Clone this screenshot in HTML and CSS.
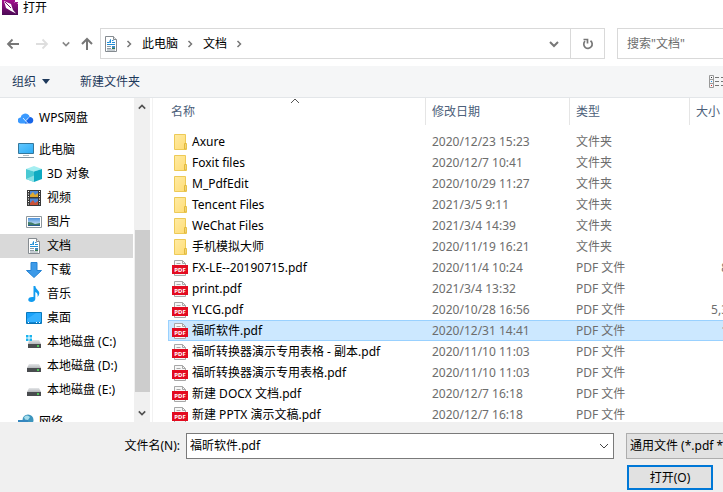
FILE: index.html
```html
<!DOCTYPE html>
<html lang="zh-CN">
<head>
<meta charset="utf-8">
<title>打开</title>
<link rel="stylesheet" href="styles.css">
</head>
<body>
<svg class="sprite" aria-hidden="true">
  <defs>
    <linearGradient id="g-folder" x1="0" y1="0" x2="1" y2="1"><stop offset="0" stop-color="#ffeba3"/><stop offset="1" stop-color="#ffdc74"/></linearGradient>
    <linearGradient id="g-purple" x1="0" y1="0" x2="0" y2="1"><stop offset="0" stop-color="#a5108f"/><stop offset="1" stop-color="#4b0a55"/></linearGradient>
    <linearGradient id="g-screen" x1="0" y1="0" x2="1" y2="1"><stop offset="0" stop-color="#62c8ff"/><stop offset="1" stop-color="#2cabf5"/></linearGradient>
    <linearGradient id="g-disk" x1="0" y1="0" x2="0" y2="1"><stop offset="0" stop-color="#e4e6e8"/><stop offset="1" stop-color="#b4b7ba"/></linearGradient>
    <linearGradient id="g-sky" x1="0" y1="0" x2="0" y2="1"><stop offset="0" stop-color="#4f94dc"/><stop offset="1" stop-color="#e3f1fa"/></linearGradient>
  </defs>
  <symbol id="i-folder" viewBox="0 0 16 16">
    <path d="M2.500.5h11v9h1v6h-12z" fill="url(#g-folder)" stroke="#edca57"/>
    <path d="M12.500 15v-5.500h1.500v5.500z" fill="#fff0b5" stroke="#e3b93b"/>
  </symbol>
  <symbol id="i-pdf" viewBox="0 0 16 16">
    <path d="M2.500.5h8l3 3v12h-11z" fill="#f7f7f7" stroke="#a7a7a7"/>
    <path d="M10.500.5v3h3M4.500 3.500h4" fill="none" stroke="#a7a7a7"/>
    <path d="M0 5h16v9H0z" fill="#e30b20"/>
    <text class="pdf-tag" x="8" y="12" text-anchor="middle">PDF</text>
  </symbol>
  <symbol id="i-doc" viewBox="0 0 16 16">
    <path d="M2.500.5h8l3 3v12h-11z" fill="#fff" stroke="#858b90"/>
    <path d="M10.500.5v3h3" fill="#e5e8e9" stroke="#858b90"/>
    <path d="M4 6.500h2.500l1-3V7M9 4.500h1.500M9 6.500h3M4 8.500h8" fill="none" stroke="#218ed6"/>
    <path d="M4 10.500h4M4 12.500h4M4 14h8" stroke="#8d9ba5"/>
    <path d="M9 10h3v3H9z" fill="#4089bd"/><path d="M9 12h3v1H9z" fill="#347b4d"/>
  </symbol>
  <symbol id="i-cloud" viewBox="0 0 16 16">
    <path d="M3 13.500a3 3 0 0 1-.4-6A4.800 4.800 0 0 1 11 5.200l1 3-4 5.300z" fill="#3b9aff"/>
    <path d="M7 13.500l3.500-6a3.600 3.600 0 0 1 3.200 0 3.300 3.300 0 0 1-.7 6z" fill="#1765e8"/>
    <path d="M5 8l5 5.500M8 10.500l3-3.200" fill="none" stroke="#fff" stroke-width=".8"/>
  </symbol>
  <symbol id="i-pc" viewBox="0 0 16 16">
    <path d="M.5 1.500h15v10H.5z" fill="url(#g-screen)" stroke="#35779b"/>
    <path d="M5 13h6v1H5z" fill="#aebbc3"/><path d="M0 15.500h16" stroke="#8194a1"/>
  </symbol>
  <symbol id="i-cube" viewBox="0 0 16 16">
    <path d="M8 0 16 3 8 5.500 0 3z" fill="#a5eef1"/><path d="M0 3l8 2.500V16l-8-3z" fill="#49c9d3"/><path d="M8 5.500 16 3v10l-8 3z" fill="#0eaac2"/>
    <path d="M0 13l8-3.500V16z" fill="#8be1e5"/>
  </symbol>
  <symbol id="i-film" viewBox="0 0 16 16">
    <path d="M1 0h14v16H1z" fill="#383838"/><path d="M4 1h8v6H4zM4 8.500h8V15H4z" fill="#4f87d5"/>
    <path d="M4 5l3-3 2 3 3-2v4H4z" fill="#e0a92e"/><path d="M4 13l3-3 2 3 3-2v4H4z" fill="#ca5138"/>
    <path d="M2.500 1v15M13.500 1v15" stroke="#fff" stroke-dasharray="1 1.500"/>
  </symbol>
  <symbol id="i-pic" viewBox="0 0 16 16">
    <path d="M.5 2.500h15v11H.5z" fill="#fff" stroke="#8e989e"/><path d="M2 4h12v8H2z" fill="url(#g-sky)"/>
    <path d="M2 8q4 0 7 2l5-1v3H2z" fill="#427d68"/><path d="M2 11h12v1H2z" fill="#275b91"/>
  </symbol>
  <symbol id="i-down" viewBox="0 0 16 16"><path d="M5 .5h6v8h4.500L8 15.500.5 8.500H5z" fill="#3d9ae8" stroke="#2583d4"/></symbol>
  <symbol id="i-note" viewBox="0 0 16 16">
    <path d="M7.500 0h1.800q.2 2.600 2.500 4.200Q15 7 11.500 11q.8-4-2.200-5v7q-.3 2.700-3.800 3Q2 16 2.300 13.300 3 10.500 7.500 11z" fill="#129cf0"/>
  </symbol>
  <symbol id="i-desk" viewBox="0 0 16 16">
    <path d="M.5 2.500h15v11H.5z" fill="#19a2fb" stroke="#0879bd"/><path d="M1 9l9-6h5v9H1z" fill="#35b1ff"/><path d="M1 13h14" stroke="#076aab"/><path d="M2 12.500h1M10 12.500h1M13 12.500h1" stroke="#fff"/>
  </symbol>
  <symbol id="i-disk" viewBox="0 0 16 16">
    <path d="M3 6h10l2 4H1z" fill="url(#g-disk)"/><path d="M1 10h14v4H1z" fill="#494c4f"/><path d="M11 12h2" stroke="#53ed5c" stroke-width="1.500"/>
  </symbol>
  <symbol id="i-sysdisk" viewBox="0 0 16 16">
    <path d="M3 6h10l2 4H2z" fill="url(#g-disk)"/><path d="M2 10h13v4H2z" fill="#494c4f"/><path d="M11 12h2" stroke="#53ed5c" stroke-width="1.500"/>
    <path d="M0 1h2.500v2.500H0zM3.500 1H6v2.500H3.500zM0 4.500h2.500V7H0zM3.500 4.500H6V7H3.500z" fill="#19b4ef"/>
  </symbol>
  <symbol id="i-net" viewBox="0 0 16 16">
    <circle cx="10" cy="6" r="5.500" fill="#3d95bd"/><path d="M6 3q3-3 6 0l-2 3-3-.5z" fill="#a4ddec"/><path d="M0 6h10v7H0z" fill="#3587bf"/>
  </symbol>
  <symbol id="i-sep" viewBox="0 0 8 8"><path d="M2.500 1l3 3-3 3" fill="none" stroke="#777" stroke-width="1.500"/></symbol>
  <symbol id="i-chev" viewBox="0 0 10 10"><path d="M1 3l4 4 4-4" fill="none" stroke="currentColor" stroke-width="2"/></symbol>
  <symbol id="i-thin" viewBox="0 0 10 10"><path d="M1 3l4 4 4-4" fill="none" stroke="currentColor"/></symbol>
</svg>

<main class="dialog">
  <header class="title">
    <svg class="ico" viewBox="0 0 16 16"><path d="M0 0h12l4 4v11H0z" fill="url(#g-purple)"/><path d="M12 0l4 0v3h-4z" fill="#fff"/><path d="M12.500 0v2.500H16" fill="none" stroke="#9b198c"/><path d="M2 1l7 3 2 6 3 3.500L9 11 4 8z" fill="#fff"/><path d="M3 2l6 6" stroke="#75116f"/></svg>
    <span>打开</span>
  </header>

  <nav class="nav">
    <button class="nav-btn back" aria-label="后退"><svg viewBox="0 0 14 14"><path d="M13 7H2M6.500 2.500 2 7l4.500 4.500" fill="none" stroke="#777" stroke-width="1.800"/></svg></button>
    <button class="nav-btn forward" aria-label="前进"><svg viewBox="0 0 14 14"><path d="M1 7h11M7.500 2.500 12 7l-4.500 4.500" fill="none" stroke="#dedede" stroke-width="1.800"/></svg></button>
    <button class="nav-btn recent" aria-label="最近位置"><svg><use href="#i-chev"/></svg></button>
    <button class="nav-btn up" aria-label="上移"><svg viewBox="0 0 14 14"><path d="M7 13V2M2 7l5-5 5 5" fill="none" stroke="#777" stroke-width="2"/></svg></button>
    <div class="address">
      <svg class="ico"><use href="#i-doc"/></svg>
      <svg class="sep"><use href="#i-sep"/></svg>
      <a href="#pc">此电脑</a>
      <svg class="sep"><use href="#i-sep"/></svg>
      <a href="#docs">文档</a>
      <svg class="sep"><use href="#i-sep"/></svg>
      <button class="drop" aria-label="历史"><svg><use href="#i-chev"/></svg></button>
      <button class="reload" aria-label="刷新"><svg viewBox="0 0 12 12"><path d="M3 3.200A4.200 4.200 0 1 0 8.500 2.800M1.500 1.500h4V5.500" fill="none" stroke="#777" stroke-width="1.700"/></svg></button>
    </div>
    <input class="search" type="text" aria-label="搜索" placeholder='搜索"文档"'>
  </nav>

  <div class="toolbar">
    <button>组织<i class="tri"></i></button>
    <button>新建文件夹</button>
    <button class="view" aria-label="更改视图"><svg viewBox="0 0 14 14"><path d="M.5.500h4v12h-4zM.5 4.500h4M.5 8.500h4" fill="none" stroke="#999"/><path d="M2 2.500h1" stroke="#333"/><path d="M2 6.500h1" stroke="#258ee0"/><path d="M2 10.500h1" stroke="#d22"/><path d="M6 2.500h8M6 6.500h8M6 10.500h8" stroke="#777" stroke-dasharray="4 2"/></svg></button>
  </div>

  <section class="body">
    <nav class="side">
      <ul>
        <li><svg class="ico"><use href="#i-cloud"/></svg>WPS网盘</li>
      </ul>
      <ul id="pc">
        <li><svg class="ico"><use href="#i-pc"/></svg>此电脑</li>
        <li class="sub"><svg class="ico"><use href="#i-cube"/></svg>3D 对象</li>
        <li class="sub"><svg class="ico"><use href="#i-film"/></svg>视频</li>
        <li class="sub"><svg class="ico"><use href="#i-pic"/></svg>图片</li>
        <li class="sub current" id="docs"><svg class="ico"><use href="#i-doc"/></svg>文档</li>
        <li class="sub"><svg class="ico"><use href="#i-down"/></svg>下载</li>
        <li class="sub"><svg class="ico"><use href="#i-note"/></svg>音乐</li>
        <li class="sub"><svg class="ico"><use href="#i-desk"/></svg>桌面</li>
        <li class="sub"><svg class="ico"><use href="#i-sysdisk"/></svg>本地磁盘 (C:)</li>
        <li class="sub"><svg class="ico"><use href="#i-disk"/></svg>本地磁盘 (D:)</li>
        <li class="sub"><svg class="ico"><use href="#i-disk"/></svg>本地磁盘 (E:)</li>
      </ul>
      <ul>
        <li><svg class="ico"><use href="#i-net"/></svg>网络</li>
      </ul>
    </nav>
    <div class="scroll">
      <svg class="flip"><use href="#i-chev"/></svg>
      <div class="track"><div class="thumb"></div></div>
      <svg><use href="#i-chev"/></svg>
    </div>

    <div class="files">
      <svg class="sort flip"><use href="#i-thin"/></svg>
      <table>
        <colgroup><col><col class="c-date"><col class="c-type"><col class="c-size"></colgroup>
        <thead><tr><th><span>名称</span></th><th><span>修改日期</span></th><th><span>类型</span></th><th><span>大小</span></th></tr></thead>
        <tbody>
          <tr><td><div><svg class="ico"><use href="#i-folder"/></svg>Axure</div></td><td>2020/12/23 15:23</td><td>文件夹</td><td></td></tr>
          <tr><td><div><svg class="ico"><use href="#i-folder"/></svg>Foxit files</div></td><td>2020/12/7 10:41</td><td>文件夹</td><td></td></tr>
          <tr><td><div><svg class="ico"><use href="#i-folder"/></svg>M_PdfEdit</div></td><td>2020/10/29 11:27</td><td>文件夹</td><td></td></tr>
          <tr><td><div><svg class="ico"><use href="#i-folder"/></svg>Tencent Files</div></td><td>2021/3/5 9:11</td><td>文件夹</td><td></td></tr>
          <tr><td><div><svg class="ico"><use href="#i-folder"/></svg>WeChat Files</div></td><td>2021/3/4 14:39</td><td>文件夹</td><td></td></tr>
          <tr><td><div><svg class="ico"><use href="#i-folder"/></svg>手机模拟大师</div></td><td>2020/11/19 16:21</td><td>文件夹</td><td></td></tr>
          <tr><td><div><svg class="ico"><use href="#i-pdf"/></svg>FX-LE--20190715.pdf</div></td><td>2020/11/4 10:24</td><td>PDF 文件</td><td>8</td></tr>
          <tr><td><div><svg class="ico"><use href="#i-pdf"/></svg>print.pdf</div></td><td>2021/3/4 13:32</td><td>PDF 文件</td><td></td></tr>
          <tr><td><div><svg class="ico"><use href="#i-pdf"/></svg>YLCG.pdf</div></td><td>2020/10/28 16:56</td><td>PDF 文件</td><td>5,3</td></tr>
          <tr class="selected"><td><div><svg class="ico"><use href="#i-pdf"/></svg>福昕软件.pdf</div></td><td>2020/12/31 14:41</td><td>PDF 文件</td><td>1</td></tr>
          <tr><td><div><svg class="ico"><use href="#i-pdf"/></svg>福昕转换器演示专用表格 - 副本.pdf</div></td><td>2020/11/10 11:03</td><td>PDF 文件</td><td></td></tr>
          <tr><td><div><svg class="ico"><use href="#i-pdf"/></svg>福昕转换器演示专用表格.pdf</div></td><td>2020/11/10 11:03</td><td>PDF 文件</td><td></td></tr>
          <tr><td><div><svg class="ico"><use href="#i-pdf"/></svg>新建 DOCX 文档.pdf</div></td><td>2020/12/7 16:18</td><td>PDF 文件</td><td></td></tr>
          <tr><td><div><svg class="ico"><use href="#i-pdf"/></svg>新建 PPTX 演示文稿.pdf</div></td><td>2020/12/7 16:18</td><td>PDF 文件</td><td></td></tr>
        </tbody>
      </table>
    </div>
  </section>

  <footer class="footer">
    <div class="row">
      <label for="fname">文件名(N):</label>
      <div class="combo">
        <input id="fname" type="text" value="福昕软件.pdf">
        <button aria-label="展开"><svg><use href="#i-thin"/></svg></button>
      </div>
      <select class="kind" aria-label="文件类型"><option>通用文件 (*.pdf *</option></select>
    </div>
    <button class="open">打开(O)</button>
  </footer>
</main>
</body>
</html>
```
FILE: styles.css
```css
* { box-sizing: border-box; }

body {
  margin: 0;
  overflow: hidden;
  background: #fff;
  color: #000;
  font: 12px/16px "Noto Sans", "Noto Sans CJK SC", sans-serif;
}

button, input, select {
  margin: 0;
  padding: 0;
  border: 0;
  border-radius: 0;
  background: none;
  color: inherit;
  font: inherit;
}

a { color: inherit; text-decoration: none; }
svg { display: block; flex: none; width: 10px; height: 10px; }
.sprite { position: absolute; width: 0; height: 0; }
.ico { width: 16px; height: 16px; }
.flip { transform: scaleY(-1); }
.pdf-tag { fill: #fff; font-size: 6px; font-weight: 700; }

.dialog {
  display: flex;
  flex-direction: column;
  height: 100vh;
}

/* Title and navigation */
.title {
  display: flex;
  gap: 5px;
  height: 28px;
  padding-left: 2px;
}

.nav {
  display: flex;
  align-items: center;
  height: 31px;
}

.nav-btn { display: flex; justify-content: center; }
.nav-btn svg { width: 14px; height: 14px; }
.back { width: 26px; }
.forward { width: 32px; }
.recent { width: 16px; color: #888; }
.nav-btn.recent svg { width: 8px; height: 8px; }
.up { width: 26px; }

.address {
  display: flex;
  flex: 1;
  align-items: center;
  height: 31px;
  margin-right: 12px;
  padding-left: 2px;
  border: 1px solid #d9d9d9;
}
.address .sep { width: 8px; height: 8px; margin: 0 9px 0 8px; }
.address .ico + .sep { margin-left: 6px; }
.drop { margin-left: auto; padding: 0 11px; color: #777; }
.reload {
  display: grid;
  place-items: center;
  align-self: stretch;
  width: 34px;
  border-left: 1px solid #d9d9d9;
}
.reload svg { width: 12px; height: 12px; }

.search {
  width: 106px;
  height: 31px;
  padding-left: 9px;
  border: 1px solid #d9d9d9;
  border-right: 0;
}
.search::placeholder { color: #6d6d6d; opacity: 1; }

.toolbar {
  display: flex;
  align-items: center;
  gap: 30px;
  height: 32px;
  margin-top: 7px;
  padding-left: 12px;
  border-bottom: 1px solid #e3e6e9;
  background: #f5f6f7;
  color: #1e395b;
}
.toolbar button { display: flex; align-items: center; gap: 6px; }
.tri {
  border: 4px solid transparent;
  border-top: 5px solid #1e395b;
  border-bottom: 0;
}
.view { margin-left: auto; }
.view svg { width: 14px; height: 14px; }

/* Folder tree */
.body {
  display: flex;
  flex: 1;
  min-height: 0;
  overflow: hidden;
}

.side { width: 133px; padding-top: 8px; }
.side ul { margin: 0 0 8px; padding: 0; list-style: none; }
.side li {
  display: flex;
  align-items: center;
  gap: 5px;
  height: 24px;
  padding-left: 18px;
  white-space: nowrap;
}
.side .sub { padding-left: 26px; }
.side .current { background: #d9d9d9; }

.scroll {
  display: flex;
  flex-direction: column;
  align-items: center;
  justify-content: space-between;
  width: 16px;
  margin-left: 1px;
  padding: 4px 0;
  background: #f0f0f0;
  color: #505050;
}
.scroll svg { width: 8px; height: 10px; }
.track {
  display: flex;
  flex-direction: column;
  justify-content: flex-end;
  flex: 1;
  width: 15px;
  padding-bottom: 16px;
}
.thumb { height: 58%; background: #cdcdcd; }

/* File list */
.files {
  position: relative;
  flex: 1;
  min-width: 0;
  margin-left: 2px;
  padding-left: 15px;
  border-left: 1px solid #f2f2f2;
}
.sort { position: absolute; top: -2px; left: 137px; color: #555; }

/* The size column runs past the right edge of the pane. */
table {
  width: calc(100% + 5px);
  border-spacing: 0;
  table-layout: fixed;
}
.c-date { width: 144px; }
.c-type { width: 120px; }
.c-size { width: 39px; }

th { padding: 0 0 6px; color: #4c607a; font-weight: 400; text-align: left; }
th span {
  display: block;
  height: 27px;
  padding-left: 6px;
  border-left: 1px solid #e5e5e5;
  line-height: 28px;
}
th:first-child span { padding-left: 2px; border-color: transparent; }

td { height: 21px; padding: 0 0 0 7px; color: #6d6d6d; white-space: nowrap; }
td:first-child { padding-left: 4px; color: #000; }
td:last-child { padding: 0; text-align: right; }
td div { display: flex; align-items: center; gap: 4px; }

.selected td {
  background: #cce8ff;
  box-shadow: inset 0 1px #99d1ff, inset 0 -1px #99d1ff;
}
.selected td:first-child {
  box-shadow: inset 1px 1px #99d1ff, inset 0 -1px #99d1ff;
}

/* File name and actions */
.footer {
  display: flex;
  flex-direction: column;
  align-items: flex-end;
  gap: 6px;
  height: 70px;
  padding-top: 11px;
  background: #f0f0f0;
}
.row { display: flex; align-items: center; align-self: stretch; }
.row label { width: 186px; padding-right: 6px; text-align: right; }
.combo {
  display: flex;
  flex: 1;
  height: 26px;
  margin-right: 12px;
  border: 1px solid #7a7a7a;
  background: #fff;
}
.combo input { flex: 1; min-width: 0; padding-left: 3px; }
.combo button { padding: 0 4px; color: #444; }
.kind {
  width: 97px;
  height: 26px;
  padding-left: 3px;
  border: 1px solid #adadad;
  border-right: 0;
  background: #e1e1e1;
  appearance: none;
}
.open {
  width: 86px;
  height: 25px;
  margin-right: 10px;
  border: 2px solid #0078d7;
  background: #e1e1e1;
}
```
